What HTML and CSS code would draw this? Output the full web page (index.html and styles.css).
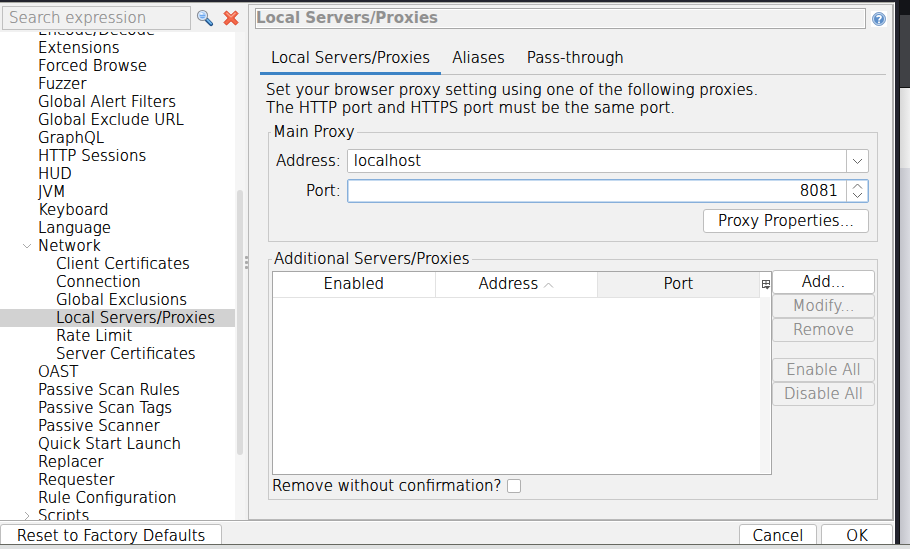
FILE: index.html
```html
<!DOCTYPE html>
<html lang="en">
<head>
<meta charset="utf-8">
<title>Options</title>
<link rel="stylesheet" href="styles.css">
</head>
<body>
<div class="desktop">
  <div class="dialog">
    <div class="split">
      <aside class="sidebar">
        <form class="search">
          <input class="search-box" type="text" placeholder="Search expression" aria-label="Search expression">
          <button class="icon-button" type="button" aria-label="Search">
            <svg width="18" height="18" viewBox="0 0 18 18">
              <path d="M10.5 10.5l4.6 4.6" stroke="#1f4f86" stroke-width="4" stroke-linecap="round"/>
              <path d="M11.3 10.8l3.8 3.8" stroke="#6fb4ea" stroke-width="2" stroke-linecap="round"/>
              <circle cx="6.5" cy="6.5" r="5" fill="#a9cdf8" stroke="#8c8f96" stroke-width="1.2"/>
              <circle cx="6.5" cy="6.5" r="4" fill="none" stroke="#e6f0fc"/>
              <path d="M4 6.5h5M4.5 8.5h4" stroke="#6ea8ee" stroke-width="1.2"/>
              <path d="M4.3 4.8h2.4" stroke="#fff" stroke-width="1.4"/>
            </svg>
          </button>
          <button class="icon-button" type="button" aria-label="Clear">
            <svg width="16" height="16" viewBox="0 0 16 16">
              <path d="M3.5 1L8 5.3 12.5 1 15 3.5 10.7 8l4.3 4.5-2.5 2.5L8 10.7 3.5 15 1 12.5 5.3 8 1 3.5z" fill="#f4694a" stroke="#d9371a" stroke-linejoin="round"/>
              <path d="M3.5 2.8L8 7l4.500-4.200" fill="none" stroke="#fba58e" stroke-width="1.2"/>
            </svg>
          </button>
        </form>
        <div class="tree-view">
          <ul class="tree">
            <li><a href="#">Encode/Decode</a></li>
            <li><a href="#">Extensions</a></li>
            <li><a href="#">Forced Browse</a></li>
            <li><a href="#">Fuzzer</a></li>
            <li><a href="#">Global Alert Filters</a></li>
            <li><a href="#">Global Exclude URL</a></li>
            <li><a href="#">GraphQL</a></li>
            <li><a href="#">HTTP Sessions</a></li>
            <li><a href="#">HUD</a></li>
            <li><a href="#">JVM</a></li>
            <li><a href="#">Keyboard</a></li>
            <li><a href="#">Language</a></li>
            <li><a class="branch" href="#"><svg class="twisty" width="10" height="10" viewBox="0 0 10 10"><path d="M1 3l4 4 4-4"/></svg>Network</a>
              <ul>
                <li><a href="#">Client Certificates</a></li>
                <li><a href="#">Connection</a></li>
                <li><a href="#">Global Exclusions</a></li>
                <li><a class="selected" href="#">Local Servers/Proxies</a></li>
                <li><a href="#">Rate Limit</a></li>
                <li><a href="#">Server Certificates</a></li>
              </ul>
            </li>
            <li><a href="#">OAST</a></li>
            <li><a href="#">Passive Scan Rules</a></li>
            <li><a href="#">Passive Scan Tags</a></li>
            <li><a href="#">Passive Scanner</a></li>
            <li><a href="#">Quick Start Launch</a></li>
            <li><a href="#">Replacer</a></li>
            <li><a href="#">Requester</a></li>
            <li><a href="#">Rule Configuration</a></li>
            <li><a class="branch" href="#"><svg class="twisty" width="10" height="10" viewBox="0 0 10 10"><path d="M3 1l4 4-4 4"/></svg>Scripts</a></li>
          </ul>
          <div class="scrollbar"><div class="thumb"></div></div>
        </div>
      </aside>
      <div class="divider"><i></i><i></i><i></i></div>
      <main class="panel">
        <header class="title-row">
          <h1>Local Servers/Proxies</h1>
          <button class="help" type="button" aria-label="Help">
            <svg width="16" height="16" viewBox="0 0 16 16">
              <circle cx="8" cy="8" r="6.500" fill="#5d8fca" stroke="#7f9fc8"/>
              <circle cx="8" cy="8" r="5.500" fill="none" stroke="#d3e2f4"/>
              <path d="M6 6.300C6 4.300 10 4.300 10 6.300 10 7.700 8 7.600 8 9.400" fill="none" stroke="#fff" stroke-width="1.700"/>
              <path d="M7.100 10.500h1.800v1.700H7.100z" fill="#fff"/>
            </svg>
          </button>
        </header>
        <div class="tabs" role="tablist">
          <button class="tab active" type="button" role="tab" aria-selected="true">Local Servers/Proxies</button>
          <button class="tab" type="button" role="tab">Aliases</button>
          <button class="tab" type="button" role="tab">Pass-through</button>
        </div>
        <div class="content">
          <p>Set your browser proxy setting using one of the following proxies.<br>The HTTP port and HTTPS port must be the same port.</p>
          <fieldset class="main-proxy">
            <legend>Main Proxy</legend>
            <div class="fields">
              <label for="address">Address:</label>
              <div class="field">
                <select id="address"><option>localhost</option></select>
                <span class="field-arrow"><svg width="11" height="7" viewBox="0 0 11 7"><path d="M1 1l4.500 4.500L10 1"/></svg></span>
              </div>
              <label for="port">Port:</label>
              <div class="field focused">
                <input id="port" type="text" inputmode="numeric" value="8081">
                <span class="field-arrow">
                  <svg width="11" height="7" viewBox="0 0 11 7"><path d="M1 5.500L5.500 1 10 5.500"/></svg>
                  <svg width="11" height="7" viewBox="0 0 11 7"><path d="M1 1l4.500 4.500L10 1"/></svg>
                </span>
              </div>
            </div>
            <button class="button properties" type="button">Proxy Properties...</button>
          </fieldset>
          <fieldset class="additional">
            <legend>Additional Servers/Proxies</legend>
            <div class="servers">
              <div class="table-frame">
                <div class="table-scroll">
                  <table>
                    <thead>
                      <tr>
                        <th>Enabled</th>
                        <th>Address <svg width="11" height="7" viewBox="0 0 11 7"><path d="M1 5.500L5.500 1 10 5.500"/></svg></th>
                        <th class="hover">Port</th>
                      </tr>
                    </thead>
                    <tbody></tbody>
                  </table>
                </div>
                <div class="table-side">
                  <button class="columns" type="button" aria-label="Choose columns">
                    <svg width="10" height="12" viewBox="0 0 10 12"><path d="M1 1.500h8M1 4.500h8M1 8.500h3M1.500 1v8M5 1v5M8.500 1v5" fill="none" stroke="#555"/><path d="M3 7h6.500L6.250 10.500z" fill="#555"/></svg>
                  </button>
                </div>
              </div>
              <div class="actions">
                <button class="button" type="button">Add...</button>
                <button class="button" type="button" disabled>Modify...</button>
                <button class="button" type="button" disabled>Remove</button>
                <button class="button apart" type="button" disabled>Enable All</button>
                <button class="button" type="button" disabled>Disable All</button>
              </div>
            </div>
            <div class="confirm">
              <label for="confirm">Remove without confirmation?</label>
              <input id="confirm" type="checkbox">
            </div>
          </fieldset>
        </div>
      </main>
    </div>
    <footer class="footer">
      <button class="button reset" type="button">Reset to Factory Defaults</button>
      <button class="button cancel" type="button">Cancel</button>
      <button class="button ok" type="button">OK</button>
    </footer>
  </div>
  <div class="frame-edge"></div>
  <div class="backdrop"><div class="bar"></div><div class="strip"></div><div class="page"></div><div class="shade"></div></div>
</div>
<div class="status"></div>
</body>
</html>
```

FILE: styles.css
```css
* { box-sizing: border-box; }

body {
  margin: 0;
  height: 100vh;
  display: flex;
  flex-direction: column;
  overflow: hidden;
  background: #23242e;
  color: #000;
  font: 200 15px/18px "DejaVu Sans", "DejaVu Sans Light", sans-serif;
  text-shadow: 0 0 currentColor;
}

button, input, select { font: inherit; color: inherit; margin: 0; text-shadow: inherit; }
button { padding: 0; }

.desktop { flex: 1; min-height: 0; display: flex; }

.dialog {
  flex: 1;
  min-width: 0;
  margin-top: 2px;
  display: flex;
  flex-direction: column;
  background: #f1f1f1;
  border-top: 1px solid #aaaaa4;
  border-right: 1px solid #fff;
}

.split { flex: 1; min-height: 0; display: flex; padding-top: 1px; }

/* Sidebar */
.sidebar { width: 245px; display: flex; flex-direction: column; }
.search { display: flex; align-items: center; gap: 6px; height: 28px; padding: 0 6px 0 2px; }
.search-box {
  width: 189px;
  height: 24px;
  padding: 0 6px;
  border: 1px solid #c0c0c0;
  background: #f1f1f1;
  outline: 0;
}
.search-box::placeholder { color: #949494; opacity: 1; }
.icon-button { width: 18px; height: 18px; border: 0; background: none; display: grid; place-items: center; margin: 0 3px 0 -1px; flex: none; }
.icon-button svg { display: block; }

.tree-view { flex: 1; min-height: 0; display: flex; overflow: hidden; background: #fff; }
.tree { flex: 1; }
.tree, .tree ul { list-style: none; margin: 0; padding: 0; }
.tree { margin-top: -11px; }
.tree a { display: block; height: 18px; padding-left: 38px; color: inherit; text-decoration: none; white-space: nowrap; }
.tree ul a { padding-left: 56px; }
.tree a.branch { display: flex; align-items: center; gap: 6px; padding-left: 22px; }
.tree a.selected { background: #d2d2d2; }
.twisty path { fill: none; stroke: #aaa; }
.scrollbar { width: 10px; padding: 158px 2px 65px; background: #f5f5f5; display: flex; }
.thumb { flex: 1; border-radius: 3px; background: #dbdbdb; }

.divider {
  width: 3px;
  display: flex;
  flex-direction: column;
  align-items: center;
  justify-content: center;
  gap: 2px;
}
.divider i { width: 3px; height: 3px; border-radius: 1px; background: #aaa; }

/* Options panel */
.panel {
  flex: 1;
  min-width: 0;
  display: flex;
  flex-direction: column;
  padding: 3px 5px 5px 6px;
  border: 1px solid #b9b9b9;
  border-right: 2px solid #b0b0b0;
}
.title-row { display: flex; align-items: center; gap: 5px; }
h1 {
  flex: 1;
  margin: 0;
  height: 21px;
  border: 1px solid #a8a8a8;
  box-shadow: inset 0 0 0 1px #fff;
  color: #909090;
  font-size: 15px;
  line-height: 19px;
  font-weight: 700;
  text-shadow: none;
}
.help { width: 16px; height: 16px; border: 0; background: #fff; }
.help svg { display: block; }

.tabs { display: flex; height: 32px; margin: 14px 1px 0 5px; box-shadow: inset 0 -1px #c0c0c0; }
.tab { height: 32px; padding: 0 11px; border: 0; border-bottom: 3px solid transparent; background: none; }
.tab.active { border-bottom-color: #3c83c5; }

.content { flex: 1; min-height: 0; display: flex; flex-direction: column; padding: 6px 9px 14px 11px; }
p { margin: 0; }
fieldset { min-width: 0; margin: 6px 0 0 2px; border: 1px solid #c9c9c9; }
legend { margin: 0; padding: 0 2px; }

.main-proxy { padding: 8px 8px 8px 7px; }
.main-proxy legend { margin-left: -5px; }
.fields { display: grid; grid-template-columns: auto 1fr; gap: 6px; align-items: center; }
.fields label { text-align: right; }
.field { display: flex; height: 24px; border: 1px solid #bebebe; border-radius: 2px; background: #fff; overflow: hidden; }
.field select, .field input { flex: 1; min-width: 0; border: 0; outline: 0; background: #fff; appearance: none; padding: 0 6px; }
.field input { text-align: right; padding-right: 8px; }
.field.focused { border-color: #87afda; box-shadow: inset 0 0 0 1px #c5daf0; }
.field.focused input { background: transparent; }
.field-arrow {
  width: 22px;
  border-left: 1px solid #c0c0c0;
  display: flex;
  flex-direction: column;
  align-items: center;
  justify-content: center;
  gap: 2px;
}
.field-arrow path { fill: none; stroke: #666; }

.button {
  height: 24px;
  border: 1px solid #bebebe;
  border-radius: 3px;
  background: #fff;
}
.button:disabled { background: #f1f1f1; border-color: #cbcbcb; color: #8c8c8c; }
.properties { display: block; width: 166px; margin: 6px 0 0 auto; }

.additional { flex: 1; display: flex; flex-direction: column; margin-top: 8px; padding: 2px 2px 3px 3px; }
.servers { flex: 1; min-height: 0; display: flex; }
.table-frame {
  flex: 1;
  display: flex;
  margin-top: 1px;
  border: 1px solid #a6a6a6;
  background: #fff;
}
.table-scroll { flex: 1; }
table { width: 100%; border-collapse: collapse; table-layout: fixed; }
th { height: 25px; padding: 0; font-weight: 200; border: solid #e2e2e2; border-width: 0 1px 1px 0; }
th svg { vertical-align: 0; }
th path { fill: none; stroke: #aaa; }
th.hover { background: #f1f1f1; }
.table-side { width: 11px; padding-bottom: 1px; display: flex; flex-direction: column; }
.table-side::after { content: ""; flex: 1; margin-right: 1px; background: #f5f5f5; }
.columns { height: 25px; border: 0; background: none; display: grid; place-items: center; }
.actions { width: 103px; display: flex; flex-direction: column; }
.apart { margin-top: 16px; }
.confirm { display: flex; align-items: center; gap: 5px; height: 20px; margin-top: 1px; }
.confirm input { appearance: none; width: 14px; height: 14px; border: 1px solid #b0b0b0; border-radius: 2px; background: #fff; }

.footer {
  display: flex;
  height: 24px;
  gap: 4px;
  padding: 3px 1px 0 0;
  border-top: 1px solid #aaa;
  box-shadow: inset 0 1px #fff;
  overflow: hidden;
}
.footer .button { flex: none; }
.reset { width: 222px; margin-right: auto; }
.cancel { width: 78px; }
.ok { width: 72px; }

/* Window frame and what lies behind it */
.frame-edge { width: 5px; background: #23242e; border-right: 1px solid #111; }
.backdrop { width: 10px; display: flex; flex-direction: column; }
.bar { height: 15px; background: #131418; }
.strip { height: 73px; background: #404145; border-bottom: 1px solid #111; }
.page { height: 80px; background: linear-gradient(90deg, #d8d8d8, #f0f0f0); }
.shade { flex: 1; background: linear-gradient(90deg, #c2c3ca, #dadbe1); }
.status { height: 5px; background: #dfe1e1; border-top: 1px solid #666860; }
```
